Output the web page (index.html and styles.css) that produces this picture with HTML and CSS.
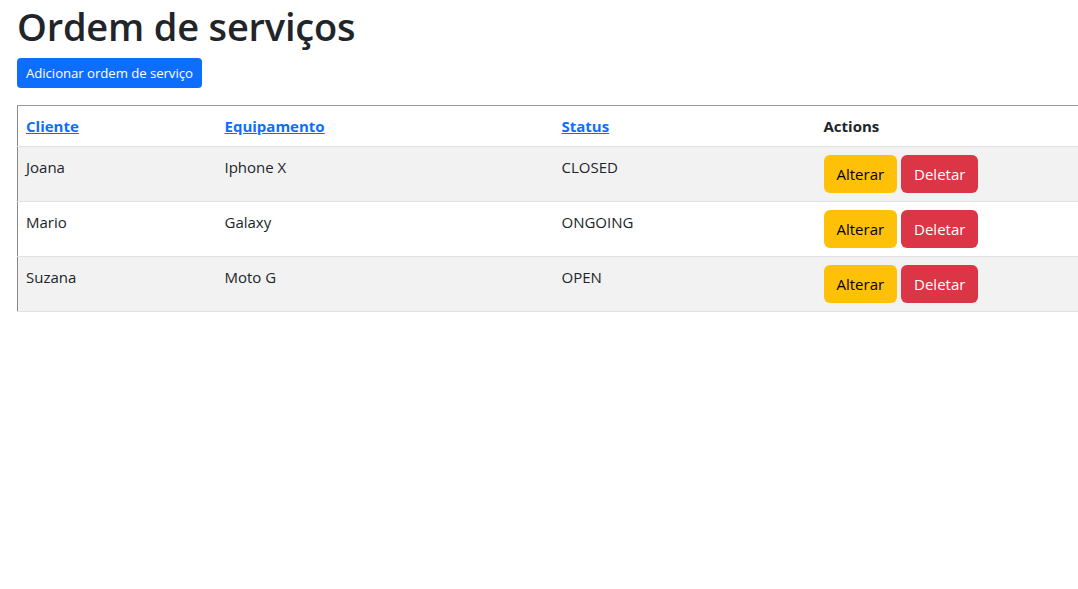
FILE: index.html
```html
<!DOCTYPE html>
<html lang="pt">
<head>
<meta charset="utf-8">
<title>Ordem de serviços</title>
<link rel="stylesheet" href="styles.css">
</head>
<body>
<div class="page">
  <h1 class="title">Ordem de serviços</h1>
  <a class="btn btn-primary btn-sm" href="#">Adicionar ordem de serviço</a>
  <div class="table-wrap">
    <table class="table">
      <colgroup>
        <col class="c1"><col class="c2"><col class="c3"><col class="c4">
      </colgroup>
      <thead>
        <tr>
          <th><a href="#">Cliente</a></th>
          <th><a href="#">Equipamento</a></th>
          <th><a href="#">Status</a></th>
          <th>Actions</th>
        </tr>
      </thead>
      <tbody>
        <tr class="odd">
          <td>Joana</td><td>Iphone X</td><td>CLOSED</td>
          <td><a class="btn btn-warning" href="#">Alterar</a> <a class="btn btn-danger" href="#">Deletar</a></td>
        </tr>
        <tr>
          <td>Mario</td><td>Galaxy</td><td>ONGOING</td>
          <td><a class="btn btn-warning" href="#">Alterar</a> <a class="btn btn-danger" href="#">Deletar</a></td>
        </tr>
        <tr class="odd">
          <td>Suzana</td><td>Moto G</td><td>OPEN</td>
          <td><a class="btn btn-warning" href="#">Alterar</a> <a class="btn btn-danger" href="#">Deletar</a></td>
        </tr>
      </tbody>
    </table>
  </div>
</div>
</body>
</html>
```
FILE: styles.css
```css
html, body {
  margin: 0;
  padding: 0;
  background: #fff;
}
body {
  font-family: "Open Sans", "Noto Sans", "Liberation Sans", sans-serif;
  font-size: 16px;
  line-height: 1.5;
  color: #212529;
  overflow: hidden;
}
.page {
  padding: 2px 0 0 17px;
}
.title {
  margin: 0 0 8px;
  font-size: 38px;
  font-weight: 600;
  line-height: 48px;
  letter-spacing: -0.2px;
}
.btn {
  display: inline-block;
  text-decoration: none;
  border: 1px solid transparent;
  border-radius: 6px;
  padding: 6px 12px;
  font-size: 15px;
  line-height: 24px;
  vertical-align: middle;
  letter-spacing: 0;
}
.btn-sm {
  padding: 4px 8px;
  font-size: 13.2px;
  line-height: 20px;
  border-radius: 4px;
  letter-spacing: -0.05px;
}
.btn-primary {
  background: #0d6efd;
  color: #fff;
}
.btn-warning {
  background: #ffc107;
  color: #000;
}
.btn-danger {
  background: #dc3545;
  color: #fff;
}
.table-wrap {
  margin-top: 17px;
}
.table {
  border-collapse: collapse;
  table-layout: fixed;
  width: 100%;
  border-top: 1px solid #999;
  border-left: 1px solid #8a8a8a;
  font-size: 15px;
}
.c1 { width: 199px; }
.c2 { width: 337px; }
.c3 { width: 262px; }
.c4 { width: auto; }
.table th, .table td {
  padding: 8px;
  text-align: left;
  vertical-align: top;
  border-bottom: 1px solid #dee2e6;
  line-height: 24px;
}
.table th {
  font-weight: 700;
}
.table th a {
  color: #0d6efd;
  text-decoration: underline;
}
.table tr.odd td {
  background: #f2f2f2;
}
```
